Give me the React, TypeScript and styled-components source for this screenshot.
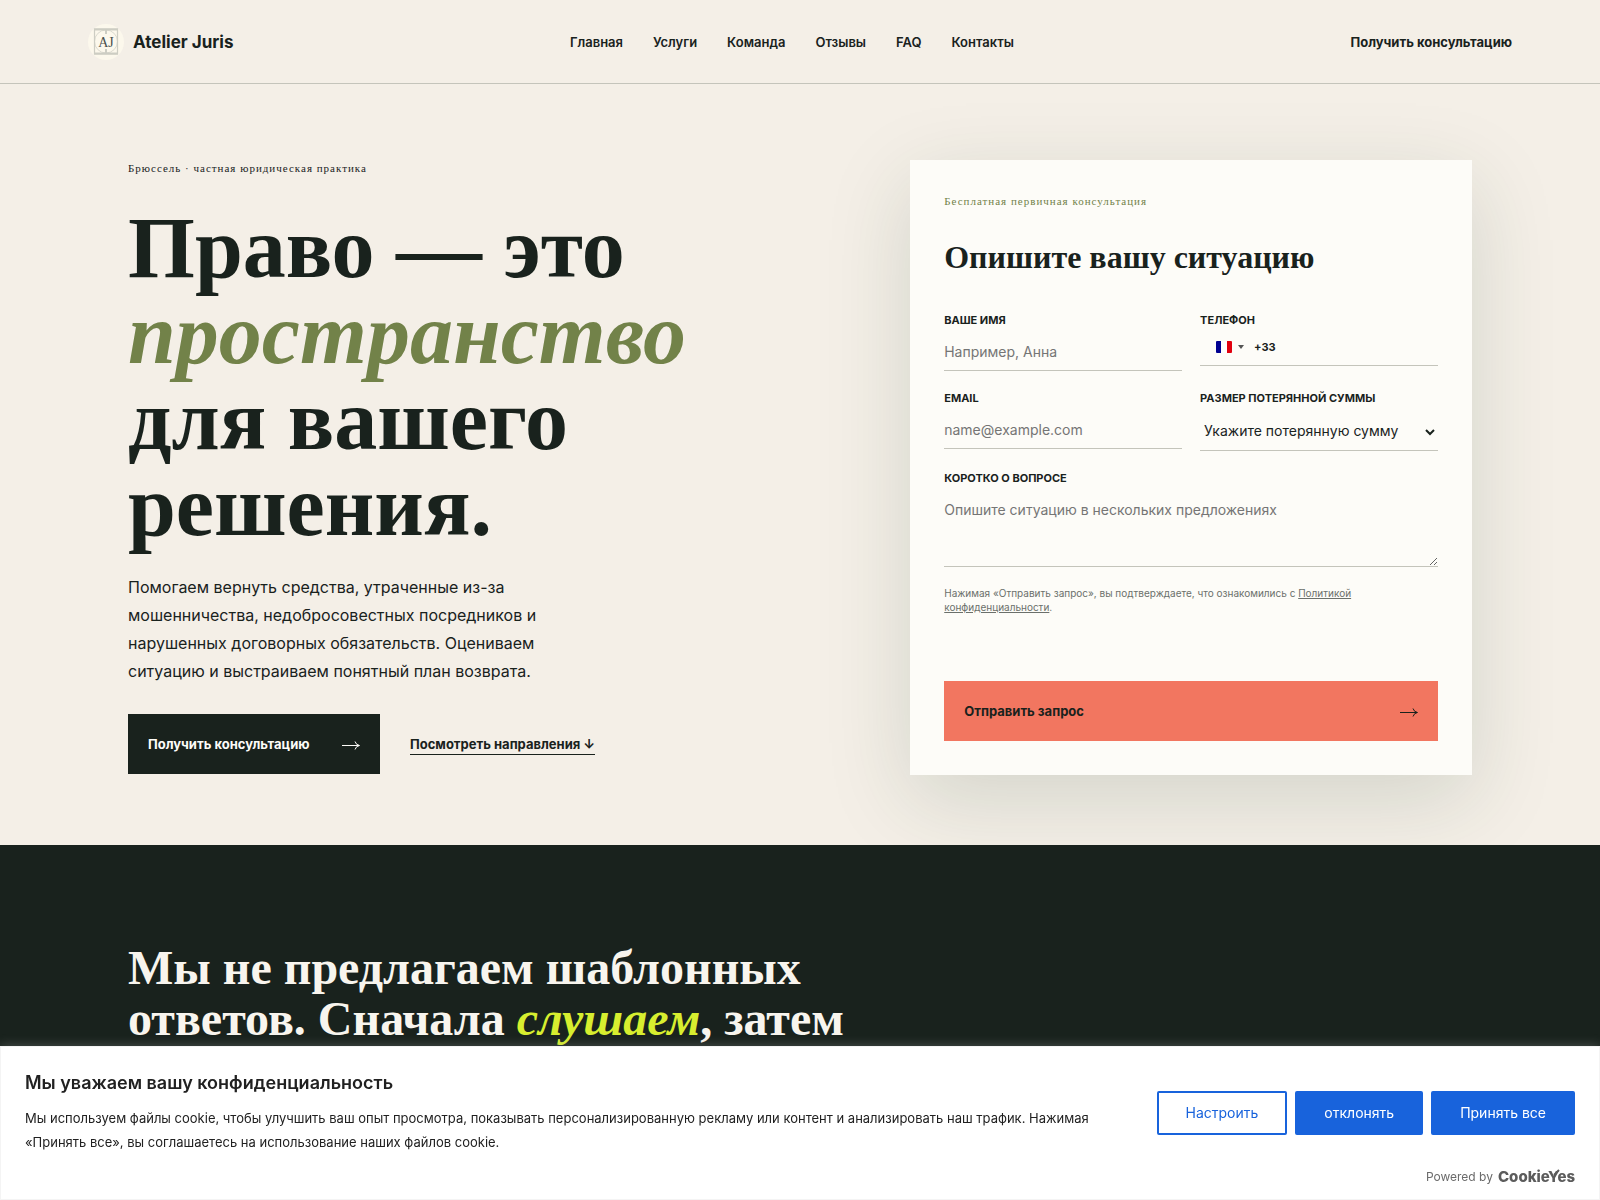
import React from "react";
import styled, { createGlobalStyle, css } from "styled-components";

const ink = "#19221d";
const paper = "#f4efe7";
const olive = "#728249";
const line = "#c4c4bb";
const sans = `Inter, "Open Sans", sans-serif`;
const serif = `"Liberation Serif", "Times New Roman", serif`;

const GlobalStyle = createGlobalStyle`
  *, *::before, *::after { box-sizing: border-box; }
  body { margin: 0; background: ${paper}; color: ${ink}; font-family: ${sans}; }
  h1, h2, h3, p { margin: 0; }
  a { color: inherit; text-decoration: none; }
  button, input, select, textarea { font: inherit; color: inherit; border-radius: 0; }
`;

const Page = styled.div`
  min-height: 100vh;
  display: flex;
  flex-direction: column;
`;

const Header = styled.header`
  height: 84px;
  padding: 0 5.5vw;
  display: flex;
  justify-content: space-between;
  align-items: center;
  border-bottom: 1px solid ${line};
`;

const Brand = styled.a`
  display: flex;
  align-items: center;
  gap: 9px;
  font-size: 17px;
  font-weight: 700;
`;

const Nav = styled.nav`
  display: flex;
  gap: 30px;
  font-size: 13px;
  font-weight: 600;
`;

const HeaderLink = styled.a`
  font-size: 13px;
  font-weight: 700;
`;

const Hero = styled.section`
  padding: 76px 8vw 70px;
  display: grid;
  grid-template-columns: minmax(0, 1.25fr) minmax(0, 1fr);
  gap: 80px;
`;

const Eyebrow = styled.p<{ $accent?: boolean }>`
  font-family: ${serif};
  font-size: 11px;
  line-height: 14px;
  letter-spacing: 1px;
  color: ${(p) => (p.$accent ? olive : ink)};
`;

const Intro = styled.div`
  padding-top: 1px;
  display: flex;
  flex-direction: column;
`;

const Title = styled.h1`
  margin: 30px 0 24px;
  font-family: ${serif};
  font-size: 86px;
  line-height: 86px;
  font-weight: 700;
  em { color: ${olive}; }
`;

const Lead = styled.p`
  max-width: 440px;
  font-size: 16px;
  line-height: 28px;
`;

const Actions = styled.div`
  margin-top: 29px;
  display: flex;
  align-items: center;
  gap: 30px;
`;

const actionBox = css`
  height: 60px;
  padding: 0 20px;
  border: 0;
  display: flex;
  align-items: center;
  justify-content: space-between;
  font-size: 13px;
  font-weight: 700;
  cursor: pointer;
`;

const PrimaryLink = styled.a`
  ${actionBox}
  width: 252px;
  background: ${ink};
  color: #fdfcf8;
`;

const TextLink = styled.a`
  border-bottom: 1px solid ${ink};
  font-size: 13px;
  line-height: 20px;
  font-weight: 700;
`;

const Card = styled.form`
  padding: 34px;
  background: #fdfcf8;
  box-shadow: 0 24px 80px rgba(28, 58, 38, 0.15);
  display: flex;
  flex-direction: column;
`;

const CardTitle = styled.h2`
  margin: 29px 0 35px;
  font-family: ${serif};
  font-size: 32px;
  line-height: 40px;
  font-weight: 700;
`;

const Fields = styled.div`
  display: grid;
  grid-template-columns: repeat(2, minmax(0, 1fr));
  gap: 19px 18px;
  align-items: start;
`;

const Field = styled.div<{ $wide?: boolean }>`
  grid-column: ${(p) => (p.$wide ? "1 / -1" : "auto")};
  display: flex;
  flex-direction: column;
  gap: 8px;
`;

const Label = styled.label`
  font-size: 11px;
  line-height: 16px;
  font-weight: 700;
  text-transform: uppercase;
`;

const control = css`
  width: 100%;
  border: 0;
  border-bottom: 1px solid ${line};
  background: transparent;
  font-size: 14px;
  outline: 0;
  &::placeholder { color: #757575; opacity: 1; }
`;

const Input = styled.input`
  ${control}
  height: 35px;
  padding: 0 0 4px;
`;

const Select = styled.select`
  ${control}
  height: 37px;
  padding: 0 0 4px;
`;

const TextArea = styled.textarea`
  ${control}
  height: 73px;
  padding: 6px 0;
  line-height: 20px;
  resize: vertical;
`;

const PhoneBox = styled.div`
  height: 30px;
  padding-left: 16px;
  padding-bottom: 8px;
  border-bottom: 1px solid ${line};
  display: flex;
  align-items: center;
  gap: 10px;
  font-size: 11px;
  font-weight: 700;
`;

const CountryButton = styled.button`
  padding: 0;
  border: 0;
  background: none;
  display: flex;
  align-items: center;
  gap: 6px;
`;

const PhoneInput = styled.input`
  flex: 1;
  min-width: 0;
  border: 0;
  padding: 0;
  background: transparent;
  outline: 0;
`;

const Consent = styled.p`
  max-width: 424px;
  margin: 19px 0 67px;
  font-size: 10px;
  line-height: 14px;
  color: #6b706b;
  a { text-decoration: underline; }
`;

const Submit = styled.button`
  ${actionBox}
  background: #f27660;
`;

const Statement = styled.section`
  flex: 1;
  padding: 97px 8vw 0;
  background: ${ink};
`;

const StatementTitle = styled.h2`
  max-width: 760px;
  font-family: ${serif};
  font-size: 48px;
  line-height: 51px;
  font-weight: 700;
  color: #f8f5ee;
  em { color: #d7ee2f; }
`;

const CookieBar = styled.aside`
  position: fixed;
  inset: auto 0 0 0;
  min-height: 154px;
  padding: 24px 24px 12px;
  border: 1px solid #f4f4f4;
  background: #fff;
  color: #212121;
  box-shadow: 0 -1px 10px rgba(172, 171, 171, 0.3);
`;

const CookieRow = styled.div`
  display: flex;
  align-items: center;
  gap: 32px;
`;

const CookieCopy = styled.div`
  flex: 1;
`;

const CookieTitle = styled.h3`
  margin-bottom: 11px;
  font-size: 18px;
  line-height: 24px;
  font-weight: 600;
`;

const CookieText = styled.p`
  font-size: 13px;
  line-height: 24px;
`;

const CookieButtons = styled.div`
  display: flex;
  gap: 8px;
`;

const CookieButton = styled.button<{ $outline?: boolean }>`
  height: 44px;
  padding: 0 27px;
  border: 2px solid #1863dc;
  border-radius: 2px;
  background: ${(p) => (p.$outline ? "#fff" : "#1863dc")};
  color: ${(p) => (p.$outline ? "#1863dc" : "#fff")};
  font-size: 14px;
  cursor: pointer;
`;

const Powered = styled.div`
  margin-top: 13px;
  display: flex;
  justify-content: flex-end;
  align-items: center;
  gap: 5px;
  font-size: 12px;
  line-height: 20px;
  color: #6b6b6b;
`;

const CookieLogo = styled.strong`
  position: relative;
  font-size: 15px;
  font-weight: 800;
  color: #5c5c5c;
  svg {
    position: absolute;
    top: 2px;
    right: 15px;
  }
`;

const Arrow = () => (
  <svg width="18" height="12" viewBox="0 0 18 12" fill="none" stroke="currentColor" aria-hidden="true">
    <path d="M0 7.5H17M13 3.5Q14 7 17.5 7.5Q14 8 13 11.5" />
  </svg>
);

const Monogram = () => (
  <svg width="36" height="36" viewBox="0 0 36 36" fill="none" aria-hidden="true">
    <circle cx="18" cy="18" r="18" fill="#fcf8ec" />
    <g stroke="#cdcdc3">
      <rect x="6.5" y="5" width="23" height="25" strokeWidth="1.2" />
      <path d="M6 5.5H30M6 29.5H30" strokeWidth="1.8" />
      <circle cx="18" cy="17.5" r="11.5" strokeWidth="0.7" />
      <path d="M18 5v5M18 25v5" strokeWidth="2" />
    </g>
    <text x="18" y="22.5" textAnchor="middle" fontFamily="Liberation Serif, serif" fontWeight="400" fontSize="14" fill="#4b504c">AJ</text>
  </svg>
);

const navItems = ["Главная", "Услуги", "Команда", "Отзывы", "FAQ", "Контакты"];

export default function App() {
  return (
    <Page>
      <GlobalStyle />
      <Header>
        <Brand href="#"><Monogram />Atelier Juris</Brand>
        <Nav>{navItems.map((item) => <a href="#" key={item}>{item}</a>)}</Nav>
        <HeaderLink href="#form">Получить консультацию</HeaderLink>
      </Header>
      <Hero>
        <Intro>
          <Eyebrow>Брюссель · частная юридическая практика</Eyebrow>
          <Title>Право — это <em>пространство</em> для вашего решения.</Title>
          <Lead>
            Помогаем вернуть средства, утраченные из-за мошенничества, недобросовестных посредников и
            нарушенных договорных обязательств. Оцениваем ситуацию и выстраиваем понятный план возврата.
          </Lead>
          <Actions>
            <PrimaryLink href="#form">Получить консультацию<Arrow /></PrimaryLink>
            <TextLink href="#services">Посмотреть направления ↓</TextLink>
          </Actions>
        </Intro>
        <Card id="form" onSubmit={(e) => e.preventDefault()}>
          <Eyebrow $accent>Бесплатная первичная консультация</Eyebrow>
          <CardTitle>Опишите вашу ситуацию</CardTitle>
          <Fields>
            <Field>
              <Label htmlFor="name">Ваше имя</Label>
              <Input id="name" placeholder="Например, Анна" />
            </Field>
            <Field>
              <Label htmlFor="phone">Телефон</Label>
              <PhoneBox>
                <CountryButton type="button" aria-label="France">
                  <svg width="16" height="12" viewBox="0 0 16 12" aria-hidden="true">
                    <rect width="16" height="12" rx="1" fill="#fff" />
                    <path d="M1 0H5V12H1Q0 12 0 11V1Q0 0 1 0Z" fill="#000091" />
                    <path d="M11 0H15Q16 0 16 1V11Q16 12 15 12H11Z" fill="#e1000f" />
                  </svg>
                  <svg width="6" height="4" viewBox="0 0 6 4" aria-hidden="true">
                    <path d="M0 0H6L3 4Z" fill="#555" />
                  </svg>
                </CountryButton>
                <span>+33</span>
                <PhoneInput id="phone" type="tel" />
              </PhoneBox>
            </Field>
            <Field>
              <Label htmlFor="email">Email</Label>
              <Input id="email" type="email" placeholder="name@example.com" />
            </Field>
            <Field>
              <Label htmlFor="amount">Размер потерянной суммы</Label>
              <Select id="amount"><option>Укажите потерянную сумму</option></Select>
            </Field>
            <Field $wide>
              <Label htmlFor="question">Коротко о вопросе</Label>
              <TextArea id="question" placeholder="Опишите ситуацию в нескольких предложениях" />
            </Field>
          </Fields>
          <Consent>
            Нажимая «Отправить запрос», вы подтверждаете, что ознакомились с <a href="#privacy">Политикой конфиденциальности</a>.
          </Consent>
          <Submit type="submit">Отправить запрос<Arrow /></Submit>
        </Card>
      </Hero>
      <Statement>
        <StatementTitle>Мы не предлагаем шаблонных ответов. Сначала <em>слушаем</em>, затем</StatementTitle>
      </Statement>
      <CookieBar aria-label="Cookie">
        <CookieRow>
          <CookieCopy>
            <CookieTitle>Мы уважаем вашу конфиденциальность</CookieTitle>
            <CookieText>
              Мы используем файлы cookie, чтобы улучшить ваш опыт просмотра, показывать персонализированную рекламу или
              контент и анализировать наш трафик. Нажимая «Принять все», вы соглашаетесь на использование наших файлов cookie.
            </CookieText>
          </CookieCopy>
          <CookieButtons>
            <CookieButton $outline>Настроить</CookieButton>
            <CookieButton>отклонять</CookieButton>
            <CookieButton>Принять все</CookieButton>
          </CookieButtons>
        </CookieRow>
        <Powered>
          Powered by
          <CookieLogo>
            CookieYes
            <svg width="10" height="10" viewBox="0 0 10 10" fill="none" stroke="currentColor" strokeWidth="2" aria-hidden="true">
              <path d="M4 6L9 1" />
            </svg>
          </CookieLogo>
        </Powered>
      </CookieBar>
    </Page>
  );
}
